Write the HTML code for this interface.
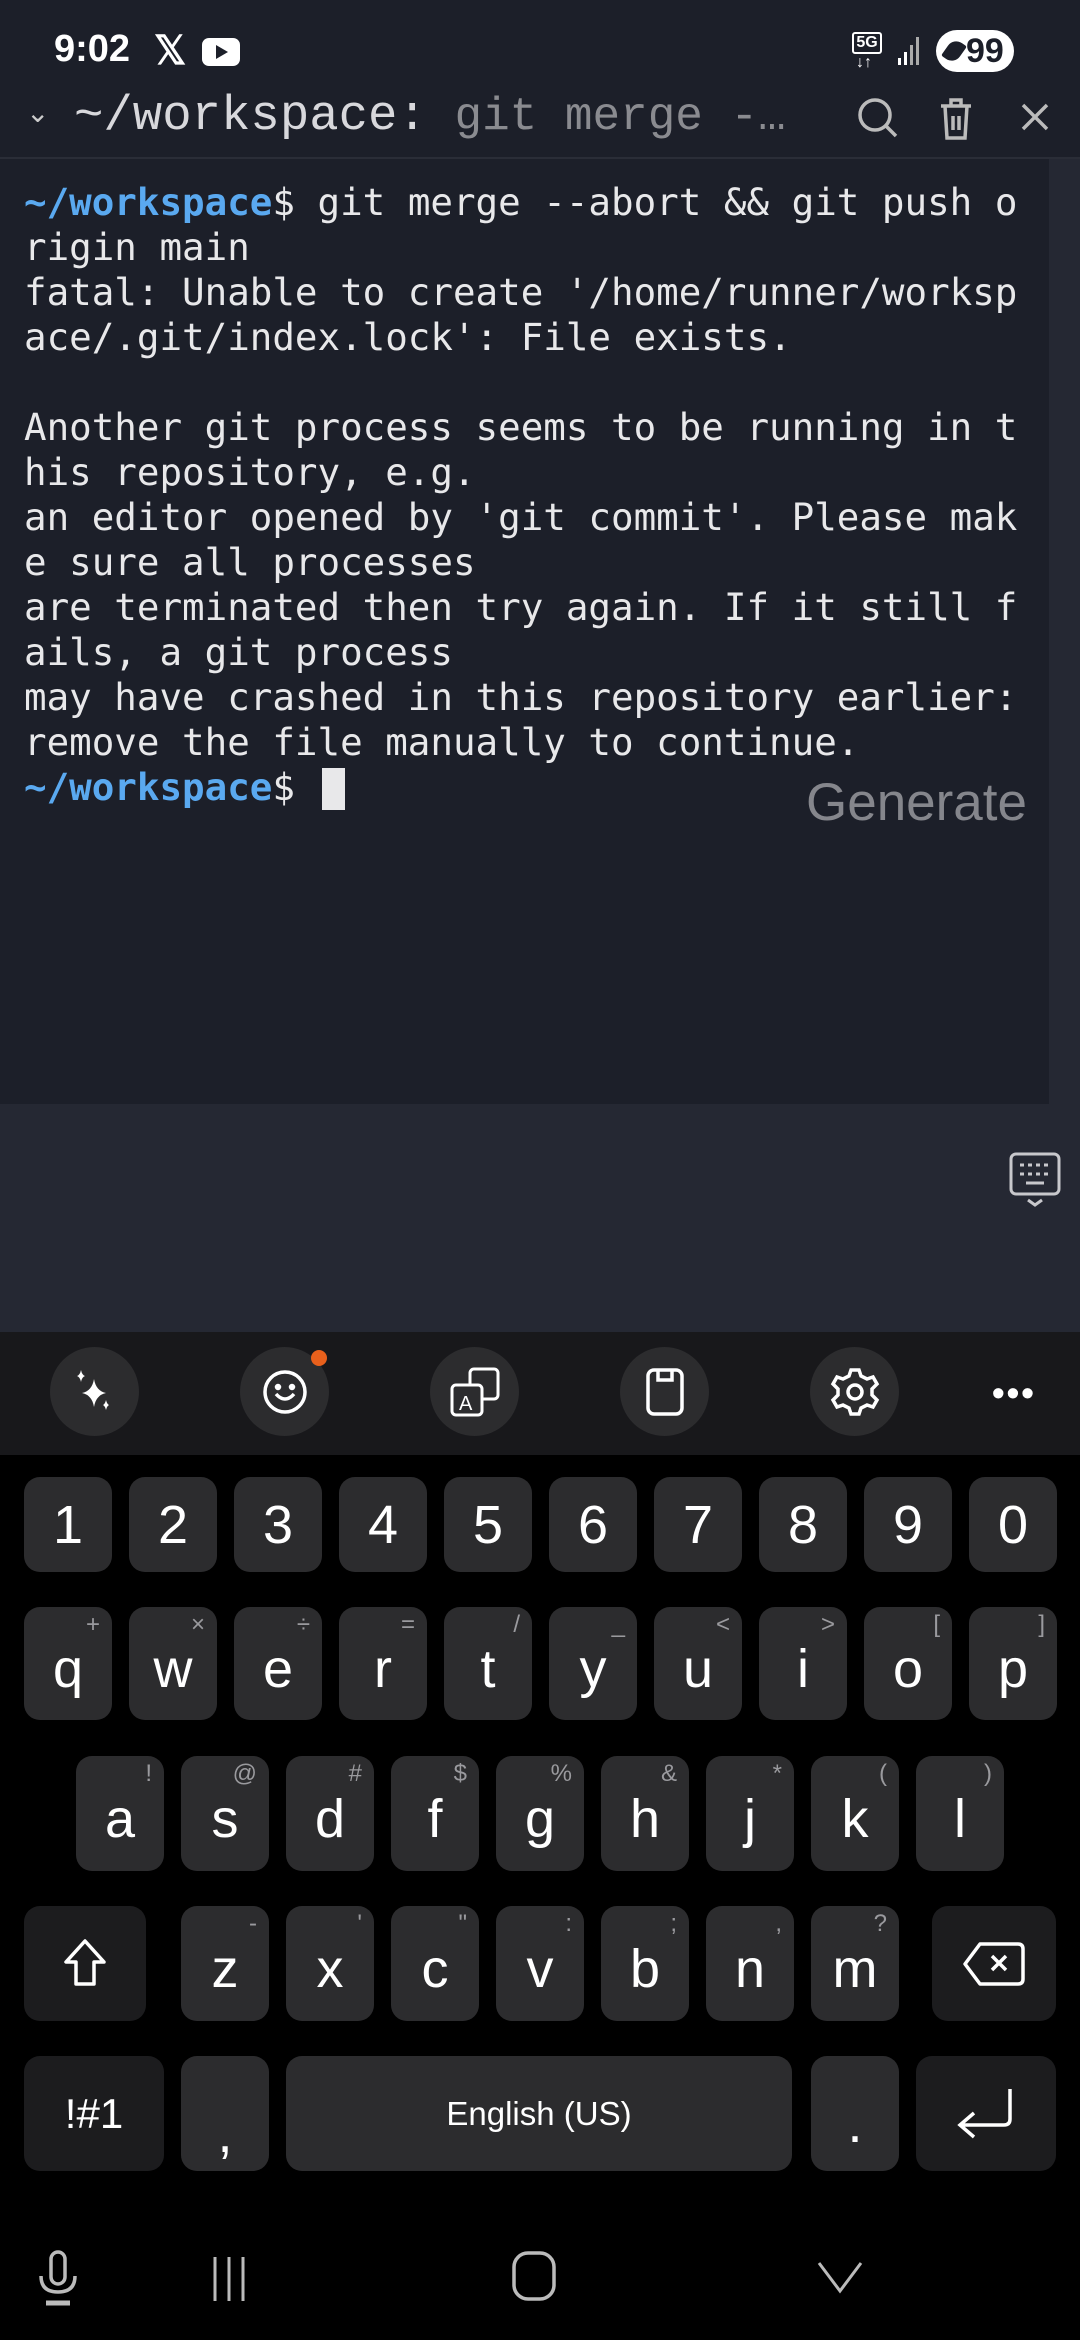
<!DOCTYPE html>
<html><head><meta charset="utf-8"><style>
*{margin:0;padding:0;box-sizing:border-box}
body{width:1080px;height:2340px;background:#000;position:relative;overflow:hidden;font-family:"Liberation Sans",sans-serif;color:#fff}
.a{position:absolute}
.term{font-family:"DejaVu Sans Mono","Liberation Mono",monospace;font-size:37.5px;line-height:45px;color:#e8e8ea;white-space:pre;left:24px;top:180px}
.b{color:#5aa9f0;font-weight:bold}
.k{position:absolute;background:#2c2c2e;border-radius:16px;display:flex;align-items:center;justify-content:center;font-size:54px;color:#fff;font-weight:500}
.d{background:#1c1c1e}
.s{position:absolute;right:12px;top:4px;font-size:24px;color:#9a9a9e;font-weight:normal}
.tb{position:absolute;top:1347px;width:89px;height:89px;border-radius:50%;background:#2c2c2e;display:flex;align-items:center;justify-content:center}
</style></head><body>
<div class="a" style="left:0;top:0;width:1080px;height:1104px;background:#1c1f29"></div>
<div class="a" style="left:0;top:157px;width:1080px;height:2px;background:#2a2d37"></div>
<div class="a" style="left:1049px;top:159px;width:31px;height:945px;background:#252833"></div>
<!-- status -->
<div class="a" style="left:54px;top:28px;font-size:38px;font-weight:bold">9:02</div>
<div class="a" style="left:154px;top:28px;font-size:40px;font-weight:bold">𝕏</div>
<div class="a" style="left:202px;top:38px;width:38px;height:28px;background:#fff;border-radius:7px"></div>
<div class="a" style="left:216px;top:45px;width:0;height:0;border-left:12px solid #1c1f29;border-top:7px solid transparent;border-bottom:7px solid transparent"></div>
<div class="a" style="left:852px;top:32px;width:30px;height:22px;border:2px solid #fff;border-radius:3px;font-size:16px;font-weight:bold;text-align:center;line-height:18px">5G</div>
<div class="a" style="left:856px;top:54px;font-size:16px">↓↑</div>
<svg class="a" style="left:898px;top:34px" width="26" height="32"><rect x="0" y="24" width="3" height="7" fill="#fff"/><rect x="6" y="18" width="3" height="13" fill="#fff"/><rect x="12" y="11" width="3" height="20" fill="#aaa"/><rect x="18" y="3" width="3" height="28" fill="#aaa"/></svg>
<div class="a" style="left:936px;top:30px;width:78px;height:42px;background:#fff;border-radius:21px;color:#1c1f29;font-weight:bold;font-size:34px;line-height:42px;padding-left:30px">99</div>
<div class="a" style="left:946px;top:40px;width:16px;height:22px;background:#1c1f29;border-radius:10px 2px 10px 2px;transform:rotate(35deg)"></div>
<!-- header -->
<div class="a" style="left:26px;top:96px;font-size:28px;color:#ccc">⌄</div>
<div class="a" style="left:74px;top:88px;font-family:'Liberation Mono',monospace;font-size:49px;color:#d8d8dc;white-space:pre">~/workspace:<span style="color:#8a8b90;font-size:46px"> git merge -…</span></div>
<svg class="a" style="left:856px;top:96px" width="44" height="44" fill="none" stroke="#bbb" stroke-width="3.5"><circle cx="19" cy="19" r="15"/><path d="M30 30l10 10"/></svg>
<svg class="a" style="left:938px;top:96px" width="36" height="46" fill="none" stroke="#bbb" stroke-width="3.5"><path d="M3 10h30M13 10V4h10v6M7 10l2 32h18l2-32M15 20v14M21 20v14"/></svg>
<svg class="a" style="left:1020px;top:102px" width="30" height="30" stroke="#bbb" stroke-width="3.5"><path d="M3 3l24 24M27 3L3 27"/></svg>
<!-- terminal -->
<div class="a term"><span class="b">~/workspace</span>$ git merge --abort &amp;&amp; git push o
rigin main
fatal: Unable to create '/home/runner/worksp
ace/.git/index.lock': File exists.

Another git process seems to be running in t
his repository, e.g.
an editor opened by 'git commit'. Please mak
e sure all processes
are terminated then try again. If it still f
ails, a git process
may have crashed in this repository earlier:
remove the file manually to continue.
<span class="b">~/workspace</span>$ </div>
<div class="a" style="left:322px;top:768px;width:23px;height:42px;background:#e8e8ea"></div>
<div class="a" style="left:806px;top:772px;font-size:53px;color:#85868c">Generate</div>
<!-- panel -->
<div class="a" style="left:0;top:1104px;width:1080px;height:228px;background:#252833"></div>
<svg class="a" style="left:1008px;top:1152px" width="54" height="56" fill="none" stroke="#c8c8cc" stroke-width="3"><rect x="3" y="2" width="48" height="40" rx="5"/><path d="M12 13h4M20 13h4M28 13h4M36 13h4M12 22h4M20 22h4M28 22h4M36 22h4M18 31h18M20 48l7 5 7-5"/></svg>
<!-- toolbar -->
<div class="a" style="left:0;top:1332px;width:1080px;height:123px;background:#18181b"></div>
<div class="tb" style="left:50px"><svg width="50" height="50" fill="#fff"><path d="M24 12q2 12 12 14q-10 2-12 14q-2-12-12-14q10-2 12-14z"/><path d="M11 3q1 5 4 6q-3 1-4 6q-1-5-4-6q3-1 4-6zM36 33q1 4 3 5q-2 1-3 5q-1-4-3-5q2-1 3-5z"/></svg></div>
<div class="tb" style="left:240px"><svg width="50" height="50" fill="none" stroke="#fff" stroke-width="3.5"><circle cx="25" cy="25" r="20"/><path d="M16 27q9 10 18 0"/><circle cx="18" cy="20" r="1.5" fill="#fff"/><circle cx="32" cy="20" r="1.5" fill="#fff"/></svg></div>
<div class="a" style="left:311px;top:1350px;width:16px;height:16px;border-radius:50%;background:#e8601c"></div>
<div class="tb" style="left:430px"><svg width="54" height="54" fill="none" stroke="#fff" stroke-width="3"><rect x="22" y="4" width="28" height="30" rx="4"/><rect x="4" y="20" width="30" height="30" rx="4" fill="#2c2c2e"/><text x="11" y="45" font-size="20" fill="#fff" stroke="none" font-family="Liberation Sans">A</text></svg></div>
<div class="tb" style="left:620px"><svg width="46" height="52" fill="none" stroke="#fff" stroke-width="3.5"><rect x="6" y="4" width="34" height="44" rx="6"/><path d="M16 4v10h14V4"/></svg></div>
<div class="tb" style="left:810px"><svg width="52" height="52" fill="none" stroke="#fff" stroke-width="3.5"><circle cx="26" cy="26" r="7"/><path d="M22 4h8l2 6 6 3 6-2 4 7-5 5v6l5 5-4 7-6-2-6 3-2 6h-8l-2-6-6-3-6 2-4-7 5-5v-6l-5-5 4-7 6 2 6-3z"/></svg></div>
<div class="a" style="left:992px;top:1372px;font-size:36px;font-weight:bold;letter-spacing:2px">•••</div>
<!-- number row -->
<div class="k" style="left:24px;top:1477px;width:88px;height:95px">1</div>
<div class="k" style="left:129px;top:1477px;width:88px;height:95px">2</div>
<div class="k" style="left:234px;top:1477px;width:88px;height:95px">3</div>
<div class="k" style="left:339px;top:1477px;width:88px;height:95px">4</div>
<div class="k" style="left:444px;top:1477px;width:88px;height:95px">5</div>
<div class="k" style="left:549px;top:1477px;width:88px;height:95px">6</div>
<div class="k" style="left:654px;top:1477px;width:88px;height:95px">7</div>
<div class="k" style="left:759px;top:1477px;width:88px;height:95px">8</div>
<div class="k" style="left:864px;top:1477px;width:88px;height:95px">9</div>
<div class="k" style="left:969px;top:1477px;width:88px;height:95px">0</div>
<!-- qwerty -->
<div class="k" style="left:24px;top:1607px;width:88px;height:113px;padding-top:10px">q<span class="s">+</span></div>
<div class="k" style="left:129px;top:1607px;width:88px;height:113px;padding-top:10px">w<span class="s">×</span></div>
<div class="k" style="left:234px;top:1607px;width:88px;height:113px;padding-top:10px">e<span class="s">÷</span></div>
<div class="k" style="left:339px;top:1607px;width:88px;height:113px;padding-top:10px">r<span class="s">=</span></div>
<div class="k" style="left:444px;top:1607px;width:88px;height:113px;padding-top:10px">t<span class="s">/</span></div>
<div class="k" style="left:549px;top:1607px;width:88px;height:113px;padding-top:10px">y<span class="s">_</span></div>
<div class="k" style="left:654px;top:1607px;width:88px;height:113px;padding-top:10px">u<span class="s">&lt;</span></div>
<div class="k" style="left:759px;top:1607px;width:88px;height:113px;padding-top:10px">i<span class="s">&gt;</span></div>
<div class="k" style="left:864px;top:1607px;width:88px;height:113px;padding-top:10px">o<span class="s">[</span></div>
<div class="k" style="left:969px;top:1607px;width:88px;height:113px;padding-top:10px">p<span class="s">]</span></div>
<!-- asdf -->
<div class="k" style="left:76px;top:1756px;width:88px;height:115px;padding-top:10px">a<span class="s">!</span></div>
<div class="k" style="left:181px;top:1756px;width:88px;height:115px;padding-top:10px">s<span class="s">@</span></div>
<div class="k" style="left:286px;top:1756px;width:88px;height:115px;padding-top:10px">d<span class="s">#</span></div>
<div class="k" style="left:391px;top:1756px;width:88px;height:115px;padding-top:10px">f<span class="s">$</span></div>
<div class="k" style="left:496px;top:1756px;width:88px;height:115px;padding-top:10px">g<span class="s">%</span></div>
<div class="k" style="left:601px;top:1756px;width:88px;height:115px;padding-top:10px">h<span class="s">&amp;</span></div>
<div class="k" style="left:706px;top:1756px;width:88px;height:115px;padding-top:10px">j<span class="s">*</span></div>
<div class="k" style="left:811px;top:1756px;width:88px;height:115px;padding-top:10px">k<span class="s">(</span></div>
<div class="k" style="left:916px;top:1756px;width:88px;height:115px;padding-top:10px">l<span class="s">)</span></div>
<!-- zxcv -->
<div class="k d" style="left:24px;top:1906px;width:122px;height:115px"><svg width="46" height="52" fill="none" stroke="#fff" stroke-width="3.5"><path d="M23 3L4 24h10v22h18V24h10z" stroke-linejoin="round"/></svg></div>
<div class="k" style="left:181px;top:1906px;width:88px;height:115px;padding-top:10px">z<span class="s">-</span></div>
<div class="k" style="left:286px;top:1906px;width:88px;height:115px;padding-top:10px">x<span class="s">'</span></div>
<div class="k" style="left:391px;top:1906px;width:88px;height:115px;padding-top:10px">c<span class="s">"</span></div>
<div class="k" style="left:496px;top:1906px;width:88px;height:115px;padding-top:10px">v<span class="s">:</span></div>
<div class="k" style="left:601px;top:1906px;width:88px;height:115px;padding-top:10px">b<span class="s">;</span></div>
<div class="k" style="left:706px;top:1906px;width:88px;height:115px;padding-top:10px">n<span class="s">,</span></div>
<div class="k" style="left:811px;top:1906px;width:88px;height:115px;padding-top:10px">m<span class="s">?</span></div>
<div class="k d" style="left:932px;top:1906px;width:124px;height:115px"><svg width="64" height="46" fill="none" stroke="#fff" stroke-width="3.5"><path d="M18 3h38q5 0 5 5v30q0 5-5 5H18L3 23z" stroke-linejoin="round"/><path d="M30 15l14 14M44 15L30 29"/></svg></div>
<!-- bottom -->
<div class="k d" style="left:24px;top:2056px;width:140px;height:115px;font-size:42px">!#1</div>
<div class="k" style="left:181px;top:2056px;width:88px;height:115px;padding-top:40px">,</div>
<div class="k" style="left:286px;top:2056px;width:506px;height:115px;font-size:33px">English (US)</div>
<div class="k" style="left:811px;top:2056px;width:88px;height:115px;padding-top:20px">.</div>
<div class="k d" style="left:916px;top:2056px;width:140px;height:115px"><svg width="64" height="56" fill="none" stroke="#fff" stroke-width="3.5"><path d="M56 3v30q0 6-6 6H8M20 27L6 39l14 12"/></svg></div>
<!-- nav -->
<svg class="a" style="left:36px;top:2250px" width="44" height="56" fill="none" stroke="#bbb" stroke-width="3.5"><rect x="15" y="2" width="14" height="32" rx="7"/><path d="M5 26q0 16 17 16q17 0 17-16"/><path d="M10 53h24" stroke-width="5"/></svg>
<svg class="a" style="left:210px;top:2255px" width="40" height="46" stroke="#bbb" stroke-width="3"><path d="M5 2v44M19 2v44M33 2v44"/></svg>
<svg class="a" style="left:510px;top:2250px" width="50" height="56" fill="none" stroke="#bbb" stroke-width="3.5"><rect x="4" y="3" width="40" height="46" rx="14"/></svg>
<svg class="a" style="left:816px;top:2260px" width="48" height="36" fill="none" stroke="#bbb" stroke-width="3"><path d="M3 3l21 28L45 3"/></svg>
</body></html>
